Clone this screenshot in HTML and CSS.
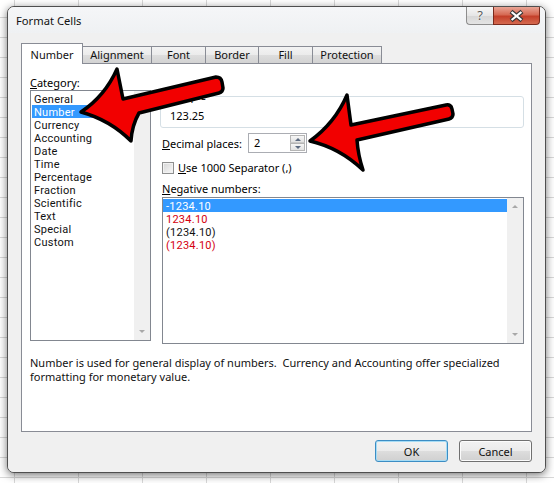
FILE: index.html
```html
<!DOCTYPE html>
<html>
<head>
<meta charset="utf-8">
<title>Format Cells</title>
<link rel="stylesheet" href="styles.css">
</head>
<body>
<div class="page">
  <div class="dialog">
    <div class="titlebar">
      <span class="title">Format Cells</span>
      <div class="caption">
        <div class="cbtn help">?</div>
        <div class="cbtn close">
          <svg width="47" height="18" viewBox="0 0 47 18">
            <path d="M18 4.5 L29 13.5 M29 4.5 L18 13.5" stroke="#3a3a3a" stroke-width="4.4" fill="none"/>
            <path d="M18.6 5 L28.4 13 M28.4 5 L18.6 13" stroke="#ffffff" stroke-width="2.2" fill="none"/>
          </svg>
        </div>
      </div>
    </div>
    <div class="client">
      <div class="tabs">
        <div class="tab active">Number</div>
        <div class="tab">Alignment</div>
        <div class="tab">Font</div>
        <div class="tab">Border</div>
        <div class="tab">Fill</div>
        <div class="tab">Protection</div>
      </div>
      <div class="panel">
        <div class="cols">
          <div class="left">
            <div class="label"><u>C</u>ategory:</div>
            <div class="listbox catlist">
              <div class="items">
                <div class="item">General</div>
                <div class="item sel">Number</div>
                <div class="item">Currency</div>
                <div class="item">Accounting</div>
                <div class="item">Date</div>
                <div class="item">Time</div>
                <div class="item">Percentage</div>
                <div class="item">Fraction</div>
                <div class="item">Scientific</div>
                <div class="item">Text</div>
                <div class="item">Special</div>
                <div class="item">Custom</div>
              </div>
              <div class="vscroll"><span class="up"></span><span class="down"></span></div>
            </div>
          </div>
          <div class="right">
            <div class="sample">
              <span class="legend">Sample</span>
              <div class="sampleval">123.25</div>
            </div>
            <div class="decrow">
              <span class="lbl"><u>D</u>ecimal places:</span>
              <div class="spin">
                <span class="val">2</span>
                <div class="spinbtns"><span class="sb sbup"></span><span class="sb sbdown"></span></div>
              </div>
            </div>
            <div class="chkrow">
              <span class="chk"></span>
              <span><u>U</u>se 1000 Separator (,)</span>
            </div>
            <div class="neglabel"><u>N</u>egative numbers:</div>
            <div class="listbox neglist">
              <div class="items">
                <div class="item sel">-1234.10</div>
                <div class="item red">1234.10</div>
                <div class="item">(1234.10)</div>
                <div class="item red">(1234.10)</div>
              </div>
              <div class="vscroll"><span class="up"></span><span class="down"></span></div>
            </div>
          </div>
        </div>
        <p class="desc">Number is used for general display of numbers.&nbsp; Currency and Accounting offer specialized<br>formatting for monetary value.</p>
      </div>
      <div class="buttons">
        <button class="btn default">OK</button>
        <button class="btn">Cancel</button>
      </div>
    </div>
  </div>
</div>
<svg class="arrows" width="554" height="483" viewBox="0 0 554 483">
  <path d="M81 112 Q105 96 117 69 L123 99 L216 77 Q221 77 222 82 L223 88 Q223 92 219 93 L139 113 Q132 125 131 141 Q110 120 81 112 Z" fill="#f20000" stroke="#000" stroke-width="3.5" stroke-linejoin="round"/>
  <path d="M310 141 Q335 123 347 95 L351 125 L446 105 Q451 104 452 109 L453 114 Q453 118 449 119 L357 140 Q358 155 363 170 Q340 148 310 141 Z" fill="#f20000" stroke="#000" stroke-width="3.5" stroke-linejoin="round"/>
</svg>
</body>
</html>
```

FILE: styles.css
```css
html, body {
  margin: 0;
  padding: 0;
}
body {
  width: 554px;
  height: 483px;
  overflow: hidden;
  position: relative;
  background-color: #ffffff;
  background-image:
    linear-gradient(90deg, #d8d8d8 1px, transparent 1px),
    linear-gradient(180deg, #d8d8d8 1px, transparent 1px);
  background-size: 64px 20px;
  background-position: 14px 0, 0 17px;
  font-family: "Noto Sans", sans-serif;
  font-size: 11px;
  color: #000;
}
.page {
  padding: 6px 0 0 7px;
}
.dialog {
  width: 539px;
  height: 467px;
  box-sizing: border-box;
  border: 1px solid #4f4f4f;
  border-radius: 7px;
  background: #f0f0f0;
  box-shadow: 0 2px 9px rgba(0, 0, 0, 0.55), inset 0 0 0 1px rgba(255, 255, 255, 0.7);
  display: flex;
  flex-direction: column;
  overflow: hidden;
}
.titlebar {
  height: 26px;
  flex: none;
  display: flex;
  justify-content: space-between;
  align-items: flex-start;
  padding: 0 5px 0 8px;
  background: linear-gradient(#f5f6f8, #eff1f3);
}
.title {
  margin-top: 6px;
  line-height: 16px;
  font-size: 11.2px;
  color: #111;
}
.caption {
  display: flex;
}
.cbtn {
  height: 18px;
  box-sizing: border-box;
}
.help {
  width: 27px;
  border: 1px solid #8d8d8d;
  border-top: none;
  border-right: none;
  border-radius: 0 0 0 4px;
  background: linear-gradient(#f7f7f7, #e6e6e6 50%, #d6d6d6 51%, #e4e4e4);
  text-align: center;
  line-height: 16px;
  font-size: 13px;
  color: #5a5a5a;
  text-shadow: 0 0 2px #fff, 0 0 1px #fff;
}
.close {
  width: 47px;
  border: 1px solid #7a2a1c;
  border-top: none;
  border-radius: 0 0 4px 0;
  background: linear-gradient(#e9a595, #d66a54 45%, #c4402a 55%, #d4694f);
}
.close svg {
  display: block;
  margin-left: -1px;
}
.client {
  flex: 1;
  padding: 10px 13px 0 13px;
  background: #f0f0f0;
}
.tabs {
  display: flex;
  align-items: flex-end;
  height: 20px;
}
.tab {
  height: 17px;
  box-sizing: border-box;
  border: 1px solid #898c95;
  border-bottom: none;
  margin-left: -1px;
  background: linear-gradient(#f3f3f3, #ebebeb 50%, #dddddd 51%, #d3d3d3);
  text-align: center;
  line-height: 16px;
  white-space: nowrap;
  color: #111;
}
.tab:nth-child(1) { width: 62px; margin-left: 0; }
.tab:nth-child(2) { width: 70px; }
.tab:nth-child(3) { width: 55px; }
.tab:nth-child(4) { width: 54px; }
.tab:nth-child(5) { width: 55px; }
.tab:nth-child(6) { width: 70px; }
.tab.active {
  height: 21px;
  margin-bottom: -1px;
  background: #ffffff;
  position: relative;
  z-index: 1;
  padding-top: 2px;
  line-height: 17px;
}
.panel {
  height: 369px;
  box-sizing: border-box;
  border: 1px solid #898c95;
  background: #ffffff;
  padding: 12px 0 0 8px;
}
.cols {
  display: flex;
  gap: 9px;
  align-items: flex-start;
}
.left {
  width: 121px;
}
.label {
  line-height: 13px;
}
.listbox {
  box-sizing: border-box;
  border: 1px solid #828790;
  background: #fff;
  display: flex;
}
.catlist {
  margin-top: 1px;
  height: 251px;
}
.items {
  flex: 1;
  padding: 1px;
}
.item {
  font-family: Roboto, "Noto Sans", sans-serif;
  font-size: 11px;
  letter-spacing: 0.25px;
  line-height: 11px;
  height: 13px;
  box-sizing: border-box;
  padding: 2px 0 0 2px;
  white-space: nowrap;
  color: #111;
}
.item.sel {
  background: #3399ff;
  color: #fff;
}
.item.red {
  color: #d4000f;
}
.vscroll {
  width: 16px;
  flex: none;
  background: #f0f0f0;
  display: flex;
  flex-direction: column;
  justify-content: space-between;
  align-items: center;
  padding: 7px 0 7px;
  box-sizing: border-box;
}
.vscroll .up,
.vscroll .down {
  width: 0;
  height: 0;
  border-left: 3px solid transparent;
  border-right: 3px solid transparent;
}
.vscroll .up {
  border-bottom: 3px solid #a8a8a8;
}
.vscroll .down {
  border-top: 3px solid #a8a8a8;
}
.right {
  width: 364px;
}
.sample {
  position: relative;
  margin-top: 20px;
  height: 32px;
  box-sizing: border-box;
  border: 1px solid #d5dfe5;
  border-radius: 3px;
  padding: 12px 0 0 9px;
  line-height: 13px;
}
.legend {
  position: absolute;
  top: -8px;
  left: 5px;
  background: #fff;
  padding: 0 2px;
  line-height: 13px;
}
.decrow {
  display: flex;
  align-items: center;
  margin-top: 5px;
  padding-left: 2px;
}
.decrow .lbl {
  width: 86px;
  line-height: 13px;
}
.spin {
  width: 59px;
  height: 20px;
  box-sizing: border-box;
  border: 1px solid #abadb3;
  background: #fff;
  display: flex;
  justify-content: space-between;
}
.spin .val {
  padding-left: 5px;
  line-height: 18px;
}
.spinbtns {
  width: 16px;
  display: flex;
  flex-direction: column;
  padding: 1px 1px 1px 0;
  box-sizing: border-box;
}
.sb {
  flex: 1;
  border: 1px solid #b5b5b5;
  background: linear-gradient(#f6f6f6, #e2e2e2);
  display: flex;
  align-items: center;
  justify-content: center;
}
.sbup {
  border-bottom-color: #c8c8c8;
}
.sbup::after,
.sbdown::after {
  content: "";
  width: 0;
  height: 0;
  border-left: 3px solid transparent;
  border-right: 3px solid transparent;
}
.sbup::after {
  border-bottom: 3px solid #5c6a80;
}
.sbdown::after {
  border-top: 3px solid #5c6a80;
}
.chkrow {
  display: flex;
  align-items: center;
  gap: 4px;
  margin-top: 8px;
  padding-left: 2px;
  height: 13px;
  line-height: 13px;
}
.chk {
  width: 12px;
  height: 12px;
  box-sizing: border-box;
  border: 1px solid #8e8f8f;
  background: linear-gradient(135deg, #d6d6d6, #f8f8f8);
  box-shadow: inset 0 0 0 1px #f2f2f2;
}
.neglabel {
  margin-top: 8px;
  padding-left: 2px;
  line-height: 13px;
}
.neglist {
  margin: 2px 0 0 2px;
  width: 362px;
  height: 147px;
}
.neglist .items {
  padding: 1px 0 0 0;
}
.neglist .item {
  padding-left: 3px;
}
.neglist .item.red {
  color: #d4000f;
}
.neglist .item.sel {
  color: #fff;
}
.desc {
  margin: 12px 0 0 0;
  line-height: 14px;
  white-space: nowrap;
  color: #111;
}
.buttons {
  display: flex;
  justify-content: flex-end;
  gap: 11px;
  margin-top: 8px;
}
.btn {
  width: 73px;
  height: 22px;
  box-sizing: border-box;
  border: 1px solid #707070;
  border-radius: 3px;
  background: linear-gradient(#f2f2f2, #ebebeb 50%, #dddddd 51%, #d0d0d0);
  font-family: "Noto Sans", sans-serif;
  font-size: 11px;
  color: #111;
  padding: 0;
  box-shadow: inset 0 0 0 1px #fcfcfc;
}
.btn.default {
  border-color: #3c8dc4;
  box-shadow: inset 0 0 0 1px #a6dcf5;
}
.arrows {
  position: absolute;
  left: 0;
  top: 0;
  pointer-events: none;
}
```
